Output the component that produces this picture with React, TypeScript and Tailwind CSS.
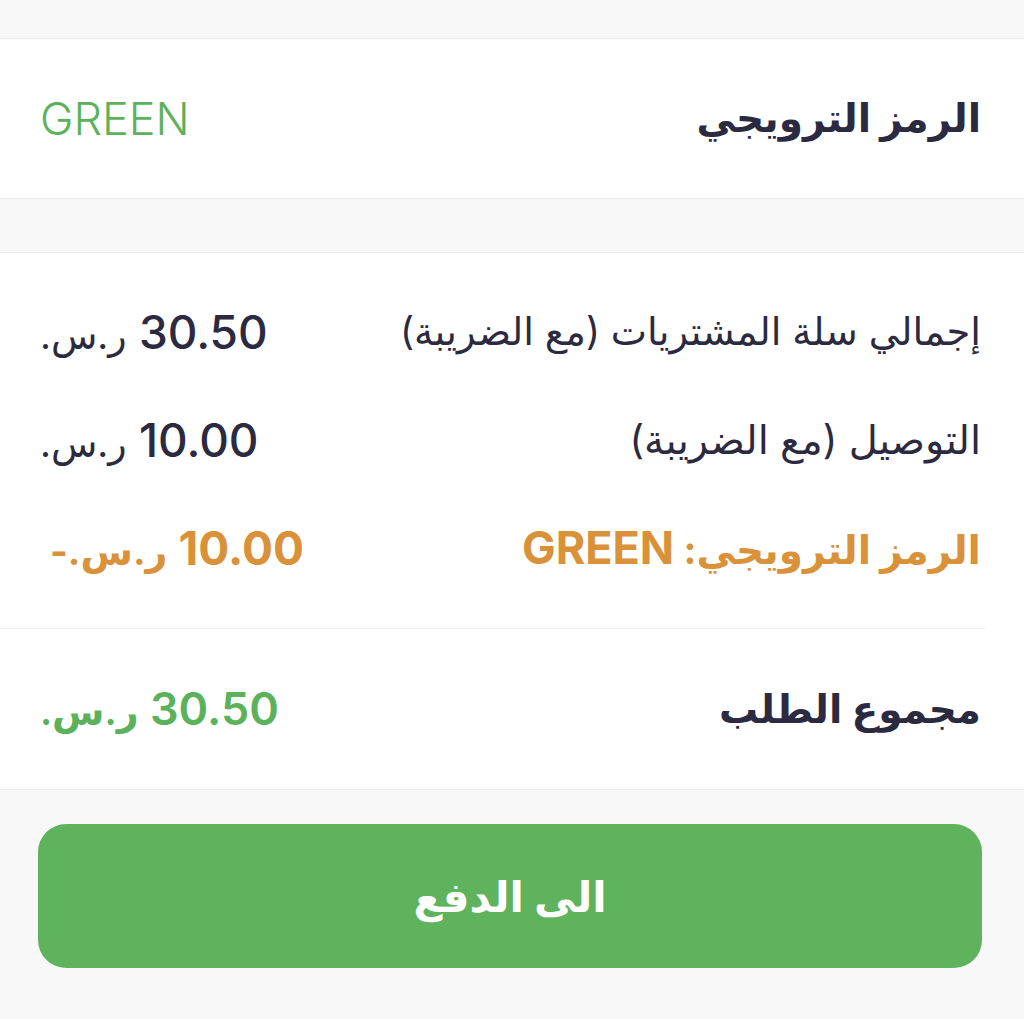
export default function App() {
  const font = { fontFamily: "Inter, 'Noto Sans', 'DejaVu Sans', sans-serif" };

  return (
    <div dir="rtl" style={font} className="min-h-[1019px] w-[1024px] bg-[#f8f8f8] text-[#2b2a40]">
      <div className="h-[39px] border-b border-[#ececec]" />

      {/* promo code */}
      <div className="flex h-[160px] items-center justify-between border-b border-[#ececec] bg-white pl-[40px] pr-[43px]">
        <span className="whitespace-nowrap text-[39px] font-bold">الرمز الترويجي</span>
        <span className="text-[45px] font-light text-[#5cb25a]">GREEN</span>
      </div>

      <div className="h-[54px] border-b border-[#ececec]" />

      {/* summary */}
      <div className="border-b border-[#ececec] bg-white pt-[25px]">
        <div className="pl-[40px] pr-[43px]">
          <div className="flex h-[108px] items-center justify-between whitespace-nowrap">
            <span className="text-[38.5px]">إجمالي سلة المشتريات (مع الضريبة)</span>
            <span className="text-[46px] font-medium">
              30.50 <span className="text-[38px] font-normal">ر.س.</span>
            </span>
          </div>
          <div className="flex h-[108px] items-center justify-between whitespace-nowrap">
            <span className="text-[40px]">التوصيل (مع الضريبة)</span>
            <span className="text-[46px] font-medium">
              10.00 <span className="text-[38px] font-normal">ر.س.</span>
            </span>
          </div>
          <div className="flex h-[108px] items-center justify-between whitespace-nowrap text-[#d9913a]">
            <span className="text-[39px] font-bold">
              الرمز الترويجي: <span className="text-[45px]">GREEN</span>
            </span>
            <span className="pl-[10px] text-[46px] font-bold">
              10.00 <span className="text-[38px]">ر.س.-</span>
            </span>
          </div>
        </div>
        <div className="mt-[26px] mr-[39px] border-b border-[#ececec]" />
        <div className="flex h-[160px] items-center justify-between whitespace-nowrap pl-[40px] pr-[43px]">
          <span className="text-[39px] font-bold">مجموع الطلب</span>
          <span className="text-[45px] font-semibold text-[#5cb25a]">
            30.50 <span className="text-[38px]">ر.س.</span>
          </span>
        </div>
      </div>

      <div className="pl-[38px] pr-[42px] pt-[34px]">
        <button className="flex h-[144px] w-full items-center justify-center rounded-[28px] bg-[#5fb35c] text-[42px] font-bold text-white">
          الى الدفع
        </button>
      </div>
    </div>
  );
}
